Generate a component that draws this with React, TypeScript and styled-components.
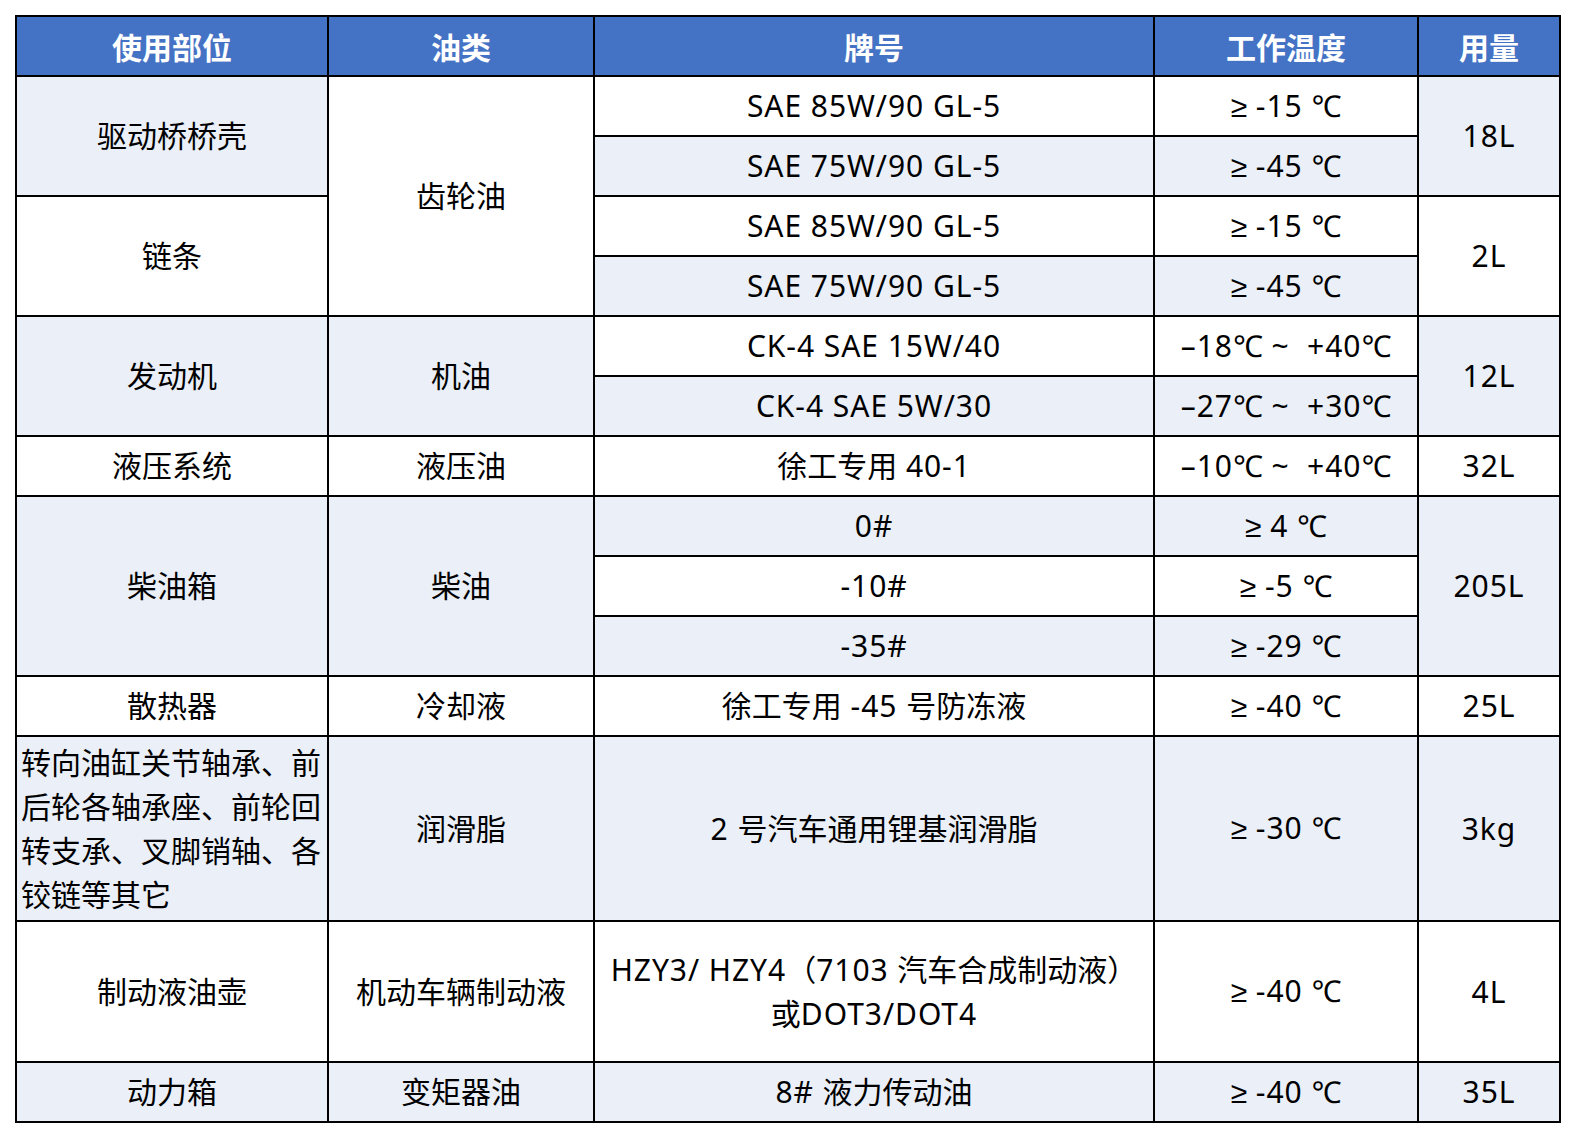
import React from "react";
import styled, { createGlobalStyle } from "styled-components";

type CellData = {
  text: string;
  span?: number;
  shade?: boolean;
  left?: boolean;
};

const HEADERS = ["使用部位", "油类", "牌号", "工作温度", "用量"];

const ROWS: CellData[][] = [
  [
    { text: "驱动桥桥壳", span: 2, shade: true },
    { text: "齿轮油", span: 4 },
    { text: "SAE 85W/90 GL-5" },
    { text: "≥ -15 ℃" },
    { text: "18L", span: 2, shade: true },
  ],
  [
    { text: "SAE 75W/90 GL-5", shade: true },
    { text: "≥ -45 ℃", shade: true },
  ],
  [
    { text: "链条", span: 2 },
    { text: "SAE 85W/90 GL-5" },
    { text: "≥ -15 ℃" },
    { text: "2L", span: 2 },
  ],
  [
    { text: "SAE 75W/90 GL-5", shade: true },
    { text: "≥ -45 ℃", shade: true },
  ],
  [
    { text: "发动机", span: 2, shade: true },
    { text: "机油", span: 2, shade: true },
    { text: "CK-4 SAE 15W/40" },
    { text: "–18℃ ~  +40℃" },
    { text: "12L", span: 2, shade: true },
  ],
  [
    { text: "CK-4 SAE 5W/30", shade: true },
    { text: "–27℃ ~  +30℃", shade: true },
  ],
  [
    { text: "液压系统" },
    { text: "液压油" },
    { text: "徐工专用 40-1" },
    { text: "–10℃ ~  +40℃" },
    { text: "32L" },
  ],
  [
    { text: "柴油箱", span: 3, shade: true },
    { text: "柴油", span: 3, shade: true },
    { text: "0#", shade: true },
    { text: "≥ 4 ℃", shade: true },
    { text: "205L", span: 3, shade: true },
  ],
  [{ text: "-10#" }, { text: "≥ -5 ℃" }],
  [
    { text: "-35#", shade: true },
    { text: "≥ -29 ℃", shade: true },
  ],
  [
    { text: "散热器" },
    { text: "冷却液" },
    { text: "徐工专用 -45 号防冻液" },
    { text: "≥ -40 ℃" },
    { text: "25L" },
  ],
  [
    {
      text: "转向油缸关节轴承、前后轮各轴承座、前轮回转支承、叉脚销轴、各铰链等其它",
      shade: true,
      left: true,
    },
    { text: "润滑脂", shade: true },
    { text: "2 号汽车通用锂基润滑脂", shade: true },
    { text: "≥ -30 ℃", shade: true },
    { text: "3kg", shade: true },
  ],
  [
    { text: "制动液油壶" },
    { text: "机动车辆制动液" },
    { text: "HZY3/ HZY4（7103 汽车合成制动液）\n或DOT3/DOT4" },
    { text: "≥ -40 ℃" },
    { text: "4L" },
  ],
  [
    { text: "动力箱", shade: true },
    { text: "变矩器油", shade: true },
    { text: "8# 液力传动油", shade: true },
    { text: "≥ -40 ℃", shade: true },
    { text: "35L", shade: true },
  ],
];

const GlobalStyle = createGlobalStyle`
  * { box-sizing: border-box; }
  body {
    margin: 0;
    background: #ffffff;
    font-family: "Noto Sans", "Noto Sans CJK SC", sans-serif;
  }
`;

const Page = styled.div`
  padding: 15px;
`;

const Grid = styled.div`
  display: grid;
  width: 1546px;
  grid-template-columns: 312px 266px 560px 264px 142px;
  grid-template-rows: repeat(12, 60px) 185px 141px 60px;
  border-left: 2px solid #000;
  border-top: 2px solid #000;
`;

const HeadCell = styled.div`
  display: flex;
  align-items: center;
  justify-content: center;
  background: #4472c4;
  color: #ffffff;
  font-size: 30px;
  font-weight: 700;
  border-right: 2px solid #000;
  border-bottom: 2px solid #000;
`;

const Cell = styled.div<{ $span: number; $shade: boolean; $left: boolean }>`
  grid-row: span ${(p) => p.$span};
  display: flex;
  align-items: center;
  justify-content: ${(p) => (p.$left ? "flex-start" : "center")};
  text-align: ${(p) => (p.$left ? "left" : "center")};
  padding: 0 4px;
  background: ${(p) => (p.$shade ? "#eaeff8" : "#ffffff")};
  color: #000;
  font-size: 30px;
  line-height: 44px;
  white-space: pre-wrap;
  border-right: 2px solid #000;
  border-bottom: 2px solid #000;
`;

// latin runs are a bit wider in the original (Segoe-like)
const Latin = styled.span`
  letter-spacing: 0.95px;
`;

const Sym = styled.span`
  font-family: "Liberation Sans", sans-serif;
  letter-spacing: 0;
`;

const CJK = /([\u2100-\u2103\u2E80-\u9FFF\u3000-\u303F\uFF00-\uFFEF]+)/;

const renderText = (text: string) =>
  text.split(CJK).map((part, i) => {
    if (!part) return null;
    if (CJK.test(part)) return <React.Fragment key={i}>{part}</React.Fragment>;
    return (
      <Latin key={i}>
        {part.split(/(≥)/).map((bit, j) =>
          bit === "≥" ? <Sym key={j}>{bit}</Sym> : bit
        )}
      </Latin>
    );
  });

export default function App() {
  return (
    <>
      <GlobalStyle />
      <Page>
        <Grid>
          {HEADERS.map((h) => (
            <HeadCell key={h}>{h}</HeadCell>
          ))}
          {ROWS.flatMap((row, r) =>
            row.map((c, i) => (
              <Cell
                key={`${r}-${i}`}
                $span={c.span ?? 1}
                $shade={!!c.shade}
                $left={!!c.left}
              >
                <span>{renderText(c.text)}</span>
              </Cell>
            ))
          )}
        </Grid>
      </Page>
    </>
  );
}
